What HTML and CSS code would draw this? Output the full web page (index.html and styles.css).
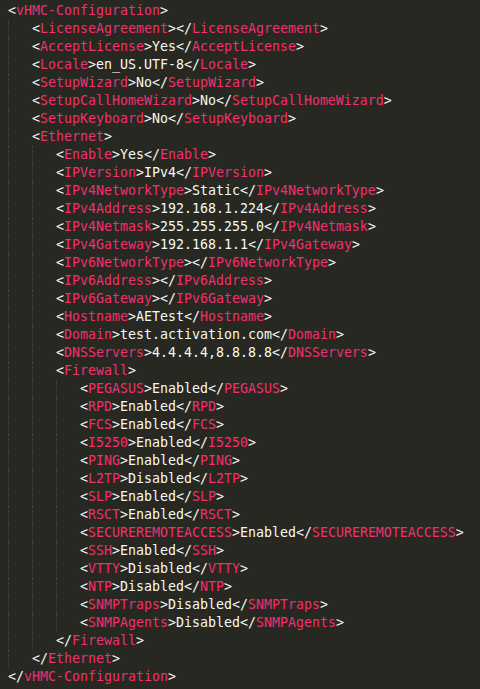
FILE: index.html
```html
<!DOCTYPE html>
<html>
<head>
<meta charset="utf-8">
<link rel="stylesheet" href="styles.css">
</head>
<body>
<div class="editor">
<div class="line"><span class="p">&lt;</span><span class="t">vHMC-Configuration</span><span class="p">&gt;</span></div>
<div class="line"><span class="g"></span><span class="p">&lt;</span><span class="t">LicenseAgreement</span><span class="p">&gt;&lt;/</span><span class="t">LicenseAgreement</span><span class="p">&gt;</span></div>
<div class="line"><span class="g"></span><span class="p">&lt;</span><span class="t">AcceptLicense</span><span class="p">&gt;Yes&lt;/</span><span class="t">AcceptLicense</span><span class="p">&gt;</span></div>
<div class="line"><span class="g"></span><span class="p">&lt;</span><span class="t">Locale</span><span class="p">&gt;en_US.UTF-8&lt;/</span><span class="t">Locale</span><span class="p">&gt;</span></div>
<div class="line"><span class="g"></span><span class="p">&lt;</span><span class="t">SetupWizard</span><span class="p">&gt;No&lt;/</span><span class="t">SetupWizard</span><span class="p">&gt;</span></div>
<div class="line"><span class="g"></span><span class="p">&lt;</span><span class="t">SetupCallHomeWizard</span><span class="p">&gt;No&lt;/</span><span class="t">SetupCallHomeWizard</span><span class="p">&gt;</span></div>
<div class="line"><span class="g"></span><span class="p">&lt;</span><span class="t">SetupKeyboard</span><span class="p">&gt;No&lt;/</span><span class="t">SetupKeyboard</span><span class="p">&gt;</span></div>
<div class="line"><span class="g"></span><span class="p">&lt;</span><span class="t">Ethernet</span><span class="p">&gt;</span></div>
<div class="line"><span class="g"></span><span class="g"></span><span class="p">&lt;</span><span class="t">Enable</span><span class="p">&gt;Yes&lt;/</span><span class="t">Enable</span><span class="p">&gt;</span></div>
<div class="line"><span class="g"></span><span class="g"></span><span class="p">&lt;</span><span class="t">IPVersion</span><span class="p">&gt;IPv4&lt;/</span><span class="t">IPVersion</span><span class="p">&gt;</span></div>
<div class="line"><span class="g"></span><span class="g"></span><span class="p">&lt;</span><span class="t">IPv4NetworkType</span><span class="p">&gt;Static&lt;/</span><span class="t">IPv4NetworkType</span><span class="p">&gt;</span></div>
<div class="line"><span class="g"></span><span class="g"></span><span class="p">&lt;</span><span class="t">IPv4Address</span><span class="p">&gt;192.168.1.224&lt;/</span><span class="t">IPv4Address</span><span class="p">&gt;</span></div>
<div class="line"><span class="g"></span><span class="g"></span><span class="p">&lt;</span><span class="t">IPv4Netmask</span><span class="p">&gt;255.255.255.0&lt;/</span><span class="t">IPv4Netmask</span><span class="p">&gt;</span></div>
<div class="line"><span class="g"></span><span class="g"></span><span class="p">&lt;</span><span class="t">IPv4Gateway</span><span class="p">&gt;192.168.1.1&lt;/</span><span class="t">IPv4Gateway</span><span class="p">&gt;</span></div>
<div class="line"><span class="g"></span><span class="g"></span><span class="p">&lt;</span><span class="t">IPv6NetworkType</span><span class="p">&gt;&lt;/</span><span class="t">IPv6NetworkType</span><span class="p">&gt;</span></div>
<div class="line"><span class="g"></span><span class="g"></span><span class="p">&lt;</span><span class="t">IPv6Address</span><span class="p">&gt;&lt;/</span><span class="t">IPv6Address</span><span class="p">&gt;</span></div>
<div class="line"><span class="g"></span><span class="g"></span><span class="p">&lt;</span><span class="t">IPv6Gateway</span><span class="p">&gt;&lt;/</span><span class="t">IPv6Gateway</span><span class="p">&gt;</span></div>
<div class="line"><span class="g"></span><span class="g"></span><span class="p">&lt;</span><span class="t">Hostname</span><span class="p">&gt;AETest&lt;/</span><span class="t">Hostname</span><span class="p">&gt;</span></div>
<div class="line"><span class="g"></span><span class="g"></span><span class="p">&lt;</span><span class="t">Domain</span><span class="p">&gt;test.activation.com&lt;/</span><span class="t">Domain</span><span class="p">&gt;</span></div>
<div class="line"><span class="g"></span><span class="g"></span><span class="p">&lt;</span><span class="t">DNSServers</span><span class="p">&gt;4.4.4.4,8.8.8.8&lt;/</span><span class="t">DNSServers</span><span class="p">&gt;</span></div>
<div class="line"><span class="g"></span><span class="g"></span><span class="p">&lt;</span><span class="t">Firewall</span><span class="p">&gt;</span></div>
<div class="line"><span class="g"></span><span class="g"></span><span class="g"></span><span class="p">&lt;</span><span class="t">PEGASUS</span><span class="p">&gt;Enabled&lt;/</span><span class="t">PEGASUS</span><span class="p">&gt;</span></div>
<div class="line"><span class="g"></span><span class="g"></span><span class="g"></span><span class="p">&lt;</span><span class="t">RPD</span><span class="p">&gt;Enabled&lt;/</span><span class="t">RPD</span><span class="p">&gt;</span></div>
<div class="line"><span class="g"></span><span class="g"></span><span class="g"></span><span class="p">&lt;</span><span class="t">FCS</span><span class="p">&gt;Enabled&lt;/</span><span class="t">FCS</span><span class="p">&gt;</span></div>
<div class="line"><span class="g"></span><span class="g"></span><span class="g"></span><span class="p">&lt;</span><span class="t">I5250</span><span class="p">&gt;Enabled&lt;/</span><span class="t">I5250</span><span class="p">&gt;</span></div>
<div class="line"><span class="g"></span><span class="g"></span><span class="g"></span><span class="p">&lt;</span><span class="t">PING</span><span class="p">&gt;Enabled&lt;/</span><span class="t">PING</span><span class="p">&gt;</span></div>
<div class="line"><span class="g"></span><span class="g"></span><span class="g"></span><span class="p">&lt;</span><span class="t">L2TP</span><span class="p">&gt;Disabled&lt;/</span><span class="t">L2TP</span><span class="p">&gt;</span></div>
<div class="line"><span class="g"></span><span class="g"></span><span class="g"></span><span class="p">&lt;</span><span class="t">SLP</span><span class="p">&gt;Enabled&lt;/</span><span class="t">SLP</span><span class="p">&gt;</span></div>
<div class="line"><span class="g"></span><span class="g"></span><span class="g"></span><span class="p">&lt;</span><span class="t">RSCT</span><span class="p">&gt;Enabled&lt;/</span><span class="t">RSCT</span><span class="p">&gt;</span></div>
<div class="line"><span class="g"></span><span class="g"></span><span class="g"></span><span class="p">&lt;</span><span class="t">SECUREREMOTEACCESS</span><span class="p">&gt;Enabled&lt;/</span><span class="t">SECUREREMOTEACCESS</span><span class="p">&gt;</span></div>
<div class="line"><span class="g"></span><span class="g"></span><span class="g"></span><span class="p">&lt;</span><span class="t">SSH</span><span class="p">&gt;Enabled&lt;/</span><span class="t">SSH</span><span class="p">&gt;</span></div>
<div class="line"><span class="g"></span><span class="g"></span><span class="g"></span><span class="p">&lt;</span><span class="t">VTTY</span><span class="p">&gt;Disabled&lt;/</span><span class="t">VTTY</span><span class="p">&gt;</span></div>
<div class="line"><span class="g"></span><span class="g"></span><span class="g"></span><span class="p">&lt;</span><span class="t">NTP</span><span class="p">&gt;Disabled&lt;/</span><span class="t">NTP</span><span class="p">&gt;</span></div>
<div class="line"><span class="g"></span><span class="g"></span><span class="g"></span><span class="p">&lt;</span><span class="t">SNMPTraps</span><span class="p">&gt;Disabled&lt;/</span><span class="t">SNMPTraps</span><span class="p">&gt;</span></div>
<div class="line"><span class="g"></span><span class="g"></span><span class="g"></span><span class="p">&lt;</span><span class="t">SNMPAgents</span><span class="p">&gt;Disabled&lt;/</span><span class="t">SNMPAgents</span><span class="p">&gt;</span></div>
<div class="line"><span class="g"></span><span class="g"></span><span class="p">&lt;/</span><span class="t">Firewall</span><span class="p">&gt;</span></div>
<div class="line"><span class="g"></span><span class="p">&lt;/</span><span class="t">Ethernet</span><span class="p">&gt;</span></div>
<div class="line"><span class="p">&lt;/</span><span class="t">vHMC-Configuration</span><span class="p">&gt;</span></div>
</div>
</body>
</html>
```
FILE: styles.css
```css
html, body {
  margin: 0;
  padding: 0;
  background: #272822;
  height: 100%;
  overflow: hidden;
}
.editor {
  padding: 2px 0 0 8px;
  font-family: "DejaVu Sans Mono", "Liberation Mono", monospace;
  font-size: 13.29px;
  line-height: 18px;
  color: #f8f8f2;
}
.line {
  display: flex;
  height: 18px;
  white-space: pre;
}
.g {
  display: inline-block;
  width: 23px;
  flex: none;
  border-left: 1px dotted #46473f;
}
.t {
  color: #f0306f;
}
.p {
  color: #f8f8f2;
}
```
